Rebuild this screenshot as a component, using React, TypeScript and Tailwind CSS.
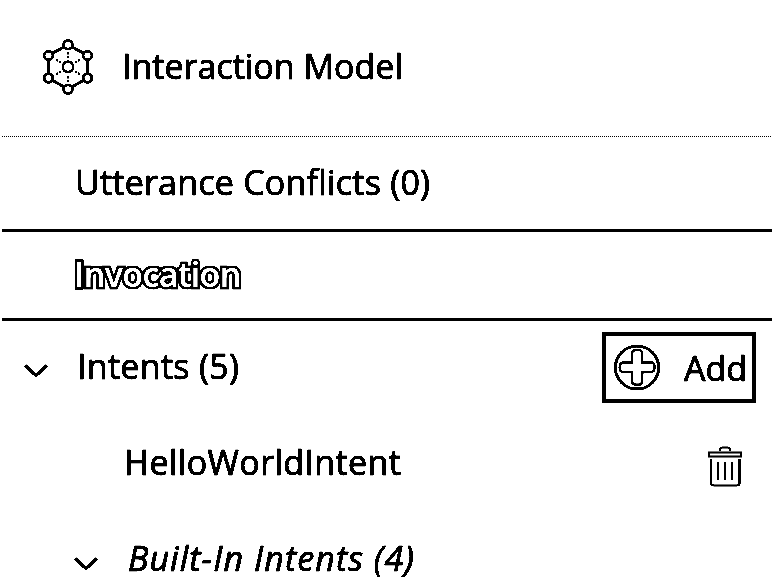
import type { ReactNode } from 'react';

function ModelIcon() {
  const nodes = [
    [38, 14.7],
    [57.5, 25.5],
    [57.5, 48],
    [38, 59.3],
    [18.5, 48],
    [18.5, 25.5],
  ];
  return (
    <svg className="mb-[2px] ml-[30px] h-[75px] w-[80px] shrink-0" viewBox="0 0 80 75" fill="none" stroke="black">
      <path d="M38 14.7 57.5 25.5V48L38 59.3 18.5 48V25.5Z" strokeWidth="3" />
      <path d="M38 22v6M38 46v7M26 29.5l5 2.9M50 29.5l-5 2.9M26 44.5l5-2.9M50 44.5l-5-2.9" strokeWidth="2.2" strokeDasharray="2.5 1.3" />
      {nodes.map(([x, y], i) => (
        <circle key={i} cx={x} cy={y} r="4.4" fill="white" strokeWidth="2.7" />
      ))}
      <circle cx="38" cy="36.8" r="5.2" fill="white" strokeWidth="2.7" />
    </svg>
  );
}

function Chevron({ className }: { className: string }) {
  return (
    <svg className={`h-4 w-6 shrink-0 ${className}`} viewBox="0 0 24 16" fill="none" stroke="black" strokeWidth="3.4">
      <path d="M1.2 2.5 12 12.5 22.8 2.5" />
    </svg>
  );
}

function PlusIcon() {
  return (
    <svg className="h-12 w-12 shrink-0" viewBox="0 0 48 48" fill="none" stroke="black">
      <circle cx="24" cy="24.5" r="21.6" strokeWidth="3" />
      <path
        d="M19 19.5V10.8Q19 7.2 22.4 7.2H25.8Q29.2 7.2 29.2 10.8V19.5H38Q41.6 19.5 41.6 24.300T38 29H29.200V38Q29.200 41.600 25.800 41.600H22.400Q19 41.600 19 38V29H10Q6.600 29 6.600 24.300T10 19.500Z"
        strokeWidth="2.300"
      />
    </svg>
  );
}

function TrashIcon() {
  return (
    <svg className="h-[42px] w-9 shrink-0" viewBox="0 0 36 42" fill="none" stroke="black">
      <path d="M13 6V4.500Q13 2.500 15 2.500H21Q23 2.500 23 4.500V6" strokeWidth="2.200" />
      <path d="M2 7.500H34V11.500H2Z" strokeWidth="2" />
      <path d="M4 14V38Q4 40.500 6.500 40.500H30Q32.500 40.500 32.500 38V14" strokeWidth="2.200" />
      <path d="M11 17V35M18 17V35M25 17V35" strokeWidth="2" />
    </svg>
  );
}

function Label({ className, children }: { className: string; children: ReactNode }) {
  return <span className={`shrink-0 whitespace-nowrap leading-[46px] ${className}`}>{children}</span>;
}

const ink = '[-webkit-text-stroke:0.9px_black]';

export default function App() {
  return (
    <main className="h-[588px] w-[772px] overflow-hidden bg-white font-['Open_Sans',sans-serif] text-[34px] font-medium text-black contrast-[20]">
      <header className="flex h-[136px] items-center">
        <ModelIcon />
        <Label className={`mb-[5px] ml-3 ${ink}`}>Interaction Model</Label>
      </header>
      <div className="ml-[2px] h-px bg-[repeating-linear-gradient(90deg,black_0_1px,white_1px_2px)]" />
      <div className="flex h-[92px] items-center pb-[2px] pl-[75px]">
        <Label className={`tracking-[0.22px] ${ink}`}>Utterance Conflicts (0)</Label>
      </div>
      <div className="ml-[2px] h-[3px] bg-black" />
      <div className="flex h-[86px] items-center pb-[2px] pl-[74px]">
        <Label className="font-semibold tracking-[-0.6px] text-white [-webkit-text-stroke:5.2px_black] [paint-order:stroke_fill]">Invocation</Label>
      </div>
      <div className="ml-[2px] h-[3px] bg-black" />
      <div className="flex h-[92px] items-center">
        <Chevron className="ml-6 mt-[7px]" />
        <Label className={`mb-[2px] ml-[29px] tracking-[0.3px] ${ink}`}>Intents (5)</Label>
        <button className="ml-auto mr-4 flex h-[71px] w-[154px] shrink-0 items-center border-4 border-black pl-[7px]">
          <PlusIcon />
          <Label className={`ml-[23px] mt-[2px] ${ink}`}>Add</Label>
        </button>
      </div>
      <div className="flex h-[97px] items-center pl-[124px]">
        <Label className={`tracking-[0.36px] ${ink}`}>HelloWorldIntent</Label>
        <span className="ml-auto mr-[29px] mt-[9px]">
          <TrashIcon />
        </span>
      </div>
      <div className="flex h-[96px] items-center pl-[74px]">
        <Chevron className="mt-[11px]" />
        <Label className={`ml-[30px] italic tracking-[1.05px] ${ink}`}>Built-In Intents (4)</Label>
      </div>
    </main>
  );
}
